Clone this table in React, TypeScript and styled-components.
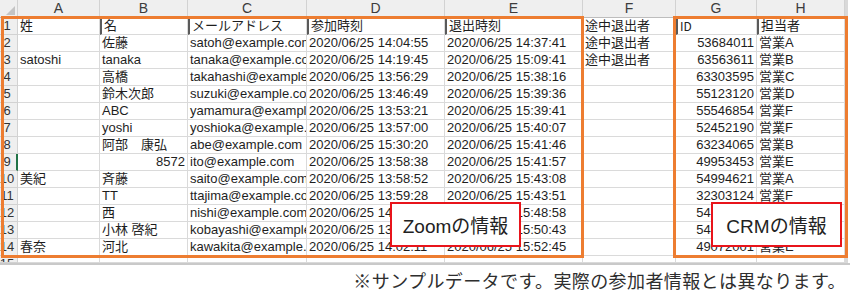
import React from 'react';
import styled, { createGlobalStyle } from 'styled-components';

const GlobalStyle = createGlobalStyle`
  html, body {
    margin: 0;
    padding: 0;
    background: #ffffff;
  }
`;

const COLS = ['A', 'B', 'C', 'D', 'E', 'F', 'G', 'H'];

type Align = 'left' | 'right';

// [value, align] per cell, columns A..H
const ROWS: string[][] = [
  ['姓', '名', 'メールアドレス', '参加時刻', '退出時刻', '途中退出者', 'ID', '担当者'],
  ['', '佐藤', 'satoh@example.com', '2020/06/25 14:04:55', '2020/06/25 14:37:41', '途中退出者', '53684011', '営業A'],
  ['satoshi', 'tanaka', 'tanaka@example.com', '2020/06/25 14:19:45', '2020/06/25 15:09:41', '途中退出者', '63563611', '営業B'],
  ['', '高橋', 'takahashi@example.com', '2020/06/25 13:56:29', '2020/06/25 15:38:16', '', '63303595', '営業C'],
  ['', '鈴木次郎', 'suzuki@example.com', '2020/06/25 13:46:49', '2020/06/25 15:39:36', '', '55123120', '営業D'],
  ['', 'ABC', 'yamamura@example.com', '2020/06/25 13:53:21', '2020/06/25 15:39:41', '', '55546854', '営業F'],
  ['', 'yoshi', 'yoshioka@example.com', '2020/06/25 13:57:00', '2020/06/25 15:40:07', '', '52452190', '営業F'],
  ['', '阿部　康弘', 'abe@example.com', '2020/06/25 15:30:20', '2020/06/25 15:41:46', '', '63234065', '営業B'],
  ['', '8572', 'ito@example.com', '2020/06/25 13:58:38', '2020/06/25 15:41:57', '', '49953453', '営業E'],
  ['美紀', '斉藤', 'saito@example.com', '2020/06/25 13:58:52', '2020/06/25 15:43:08', '', '54994621', '営業A'],
  ['', 'TT', 'ttajima@example.com', '2020/06/25 13:59:28', '2020/06/25 15:43:51', '', '32303124', '営業F'],
  ['', '西', 'nishi@example.com', '2020/06/25 14:00:12', '2020/06/25 15:48:58', '', '54120938', '営業C'],
  ['', '小林 啓紀', 'kobayashi@example.com', '2020/06/25 13:59:47', '2020/06/25 15:50:43', '', '54872210', '営業D'],
  ['春奈', '河北', 'kawakita@example.com', '2020/06/25 14:02:11', '2020/06/25 15:52:45', '', '49072001', '営業E'],
  ['', '', '', '', '', '', '', ''],
];

const isNumber = (v: string) => /^\d+$/.test(v);

const App = () => {
  return (
    <>
      <GlobalStyle />
      <Page>
        <SheetArea>
          <Sheet>
            <Corner />
            {COLS.map((c) => (
              <ColHead key={c}>{c}</ColHead>
            ))}
            {ROWS.map((row, r) => (
              <React.Fragment key={r}>
                <RowHead $selected={r === 8}>
                  <RowNum>{r + 1}</RowNum>
                </RowHead>
                {row.map((v, c) => {
                  const align: Align = isNumber(v) ? 'right' : 'left';
                  const isTitle = r === 0;
                  return (
                    <Cell key={c} $align={align} $title={isTitle && c > 0 && c !== 5} $mono={isTitle && c === 6}>
                      {v}
                    </Cell>
                  );
                })}
              </React.Fragment>
            ))}
          </Sheet>
          <ScrollTrack>
            <ScrollThumb />
          </ScrollTrack>
        </SheetArea>
        <Footnote>※サンプルデータです。実際の参加者情報とは異なります。</Footnote>

        <Frame $left={1} $width={583} />
        <Frame $left={673} $width={175} />
        <Label $left={390}>Zoomの情報</Label>
        <Label $left={711}>CRMの情報</Label>
      </Page>
    </>
  );
};

const Page = styled.div`
  position: relative;
  width: 850px;
  height: 290px;
  overflow: hidden;
  background: #ffffff;
  font-family: 'Liberation Sans', 'Noto Sans CJK JP', sans-serif;
`;

const SheetArea = styled.div`
  display: flex;
  border-bottom: 2px solid #c9c9c9;
`;

const Sheet = styled.div`
  display: grid;
  grid-template-columns: 18px 82px 88px 119px 138px 138px 93px 81px 88px;
  grid-template-rows: 18px repeat(14, 17px) 7px;
  overflow: hidden;
`;

const Corner = styled.div`
  position: relative;
  background: #efefef;
  border-right: 1px solid #d2d2d2;
  border-bottom: 1px solid #bdbdbd;
  box-sizing: border-box;

  &::after {
    content: '';
    position: absolute;
    right: 2px;
    bottom: 2px;
    border-left: 9px solid transparent;
    border-bottom: 9px solid #c4c4c4;
  }
`;

const ColHead = styled.div`
  background: #efefef;
  border-right: 1px solid #d2d2d2;
  border-bottom: 1px solid #bdbdbd;
  box-sizing: border-box;
  color: #3c3c3c;
  font-size: 14px;
  line-height: 17px;
  text-align: center;
`;

const RowHead = styled.div<{ $selected?: boolean }>`
  position: relative;
  background: #efefef;
  border-right: ${(p) => (p.$selected ? '2px solid #217346' : '1px solid #d2d2d2')};
  border-bottom: 1px solid #d2d2d2;
  box-sizing: border-box;
  overflow: hidden;
`;

const RowNum = styled.div`
  width: 24px;
  margin-left: -5px;
  text-align: center;
  color: #333333;
  font-size: 13px;
  line-height: 16px;
`;

const Cell = styled.div<{ $align: Align; $title?: boolean; $mono?: boolean }>`
  box-sizing: border-box;
  border-right: 1px solid #dadada;
  border-bottom: 1px solid #dadada;
  border-left: ${(p) => (p.$title ? '2px solid #5a5a5a' : 'none')};
  padding: 0 2px;
  overflow: hidden;
  white-space: nowrap;
  text-align: ${(p) => p.$align};
  color: ${(p) => (p.$mono ? '#222222' : '#1e1e1e')};
  font-family: ${(p) =>
    p.$mono ? "'Noto Sans CJK JP', monospace" : "'Liberation Sans', 'Noto Sans CJK JP', sans-serif"};
  font-size: ${(p) => (p.$mono ? '12px' : '13px')};
  line-height: 16px;
`;

const ScrollTrack = styled.div`
  position: relative;
  width: 3px;
  background: #d9d9d9;
`;

const ScrollThumb = styled.div`
  position: absolute;
  left: 1px;
  top: 153px;
  width: 2px;
  height: 20px;
  background: #8a8a8a;
`;

const Footnote = styled.div`
  margin-top: 3px;
  padding-right: 4px;
  text-align: right;
  color: #2e2e2e;
  font-family: 'Noto Sans CJK JP', sans-serif;
  font-size: 18px;
  letter-spacing: 0.4px;
  line-height: 24px;
`;

const Frame = styled.div<{ $left: number; $width: number }>`
  position: absolute;
  top: 16px;
  left: ${(p) => p.$left}px;
  width: ${(p) => p.$width}px;
  height: 242px;
  box-sizing: border-box;
  border: 3px solid #ed7d31;
  pointer-events: none;
`;

const Label = styled.div<{ $left: number }>`
  position: absolute;
  top: 202px;
  left: ${(p) => p.$left}px;
  width: 131px;
  height: 45px;
  box-sizing: border-box;
  border: 2px solid #e8141b;
  background: #ffffff;
  display: flex;
  align-items: center;
  justify-content: center;
  color: #222222;
  font-family: 'Liberation Sans', 'Noto Sans CJK JP', sans-serif;
  font-size: 19px;
`;

export default App;
